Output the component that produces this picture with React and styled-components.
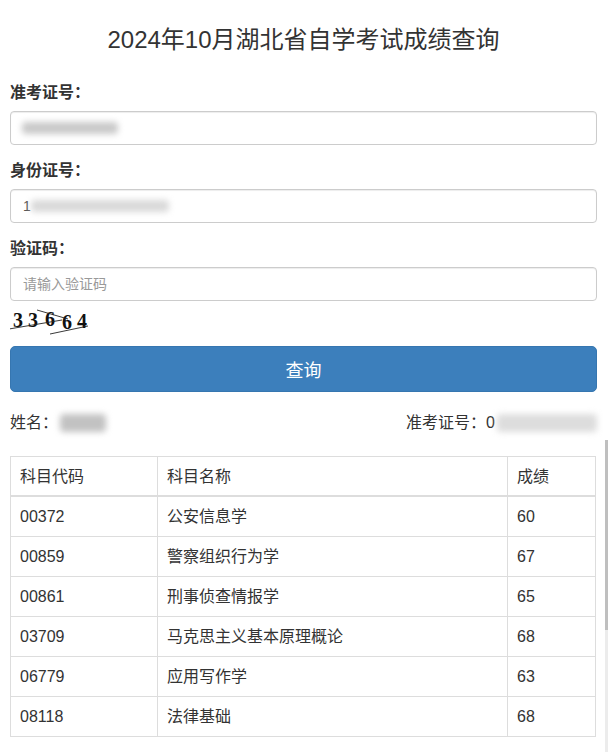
import React from "react";
import styled, { createGlobalStyle, css } from "styled-components";

const GlobalStyle = createGlobalStyle`
  html, body {
    margin: 0;
    padding: 0;
    background: #fff;
  }
  body {
    font-family: "Liberation Sans", "Noto Sans CJK SC", sans-serif;
    color: #333;
  }
  * {
    box-sizing: border-box;
  }
`;

const Page = styled.div`
  width: 608px;
  padding: 22px 11px 16px 10px;
`;

const Title = styled.h1`
  margin: 0 0 24px;
  font-size: 24px;
  line-height: 36px;
  font-weight: normal;
  text-align: center;
  color: #333;
`;

const Group = styled.div`
  margin-bottom: 15px;
`;

const Label = styled.label`
  display: block;
  font-size: 16px;
  line-height: 22px;
  font-weight: bold;
  margin-bottom: 7px;
  color: #333;
`;

const fieldBase = css`
  display: flex;
  align-items: center;
  width: 100%;
  height: 34px;
  padding: 6px 12px;
  border: 1px solid #ccc;
  border-radius: 4px;
  box-shadow: inset 0 1px 1px rgba(0, 0, 0, 0.075);
  background: #fff;
  font-size: 14px;
  font-family: inherit;
  color: #555;
`;

const FieldBox = styled.div`
  ${fieldBase}
`;

const FieldInput = styled.input`
  ${fieldBase}
  outline: none;
  &::placeholder {
    color: #999;
  }
`;

const Blur = styled.span`
  display: inline-block;
  width: ${(p) => p.$w}px;
  height: ${(p) => p.$h || 12}px;
  margin-left: ${(p) => p.$ml || 0}px;
  border-radius: 4px;
  background: ${(p) => p.$bg || "#c9c9c9"};
  filter: blur(3px);
`;

const Digit = styled.span`
  font-size: 14px;
  color: #555;
`;

const Captcha = styled.svg`
  display: block;
  margin: -11px 0 11px;
`;

const Button = styled.button`
  display: block;
  width: 100%;
  height: 46px;
  border: 1px solid #3676b0;
  border-radius: 5px;
  background: #3c7fbc;
  color: #fff;
  font-size: 18px;
  font-family: inherit;
  cursor: pointer;
`;

const InfoRow = styled.div`
  display: flex;
  justify-content: space-between;
  align-items: center;
  margin: 20px 0 22px;
  font-size: 16px;
  line-height: 22px;
`;

const InfoItem = styled.div`
  display: flex;
  align-items: center;
`;

const Table = styled.table`
  width: 585px;
  border-collapse: collapse;
  border: 1px solid #ddd;
  font-size: 16px;
  table-layout: fixed;

  th,
  td {
    border: 1px solid #ddd;
    padding: 8px 8px 8px 9px;
    line-height: 23px;
    text-align: left;
    font-weight: normal;
    color: #333;
  }

  thead th {
    border-bottom: 2px solid #ddd;
    padding-bottom: 7px;
  }
`;

const ScrollThumb = styled.div`
  position: fixed;
  right: 0;
  top: 440px;
  width: 3px;
  height: 190px;
  background: #bfbfbf;
`;

const ScrollTrack = styled.div`
  position: fixed;
  right: 0;
  top: 630px;
  bottom: 0;
  width: 3px;
  background: #ececec;
`;

const scores = [
  ["00372", "公安信息学", "60"],
  ["00859", "警察组织行为学", "67"],
  ["00861", "刑事侦查情报学", "65"],
  ["03709", "马克思主义基本原理概论", "68"],
  ["06779", "应用写作学", "63"],
  ["08118", "法律基础", "68"],
];

const CaptchaImage = () => (
  <Captcha width="84" height="30" viewBox="0 0 84 30">
    <g fontFamily="'Liberation Serif', serif" fontWeight="bold" fontSize="20" fill="#111">
      <text x="3" y="22">3</text>
      <text x="18" y="22">3</text>
      <text x="35" y="21">6</text>
      <text x="52" y="24">6</text>
      <text x="67" y="23">4</text>
    </g>
    <line x1="-1" y1="24" x2="52" y2="15" stroke="#222" strokeWidth="0.9" />
    <line x1="27" y1="5" x2="58" y2="14" stroke="#222" strokeWidth="0.9" />
    <line x1="40" y1="29" x2="78" y2="21" stroke="#222" strokeWidth="0.9" />
  </Captcha>
);

export default function App() {
  return (
    <>
      <GlobalStyle />
      <Page>
        <Title>2024年10月湖北省自学考试成绩查询</Title>

        <Group>
          <Label>准考证号：</Label>
          <FieldBox>
            <Blur $w={96} $ml={-1} />
          </FieldBox>
        </Group>

        <Group>
          <Label>身份证号：</Label>
          <FieldBox>
            <Digit>1</Digit>
            <Blur $w={138} $bg="#d9d9d9" />
          </FieldBox>
        </Group>

        <Group>
          <Label>验证码：</Label>
          <FieldInput placeholder="请输入验证码" />
        </Group>

        <CaptchaImage />

        <Button>查询</Button>

        <InfoRow>
          <InfoItem>
            姓名：
            <Blur $w={46} $h={18} $bg="#c2c2c2" $ml={2} />
          </InfoItem>
          <InfoItem>
            准考证号：0
            <Blur $w={100} $h={18} $bg="#dddddd" $ml={2} />
          </InfoItem>
        </InfoRow>

        <Table>
          <colgroup>
            <col style={{ width: 147 }} />
            <col style={{ width: 350 }} />
            <col style={{ width: 88 }} />
          </colgroup>
          <thead>
            <tr>
              <th>科目代码</th>
              <th>科目名称</th>
              <th>成绩</th>
            </tr>
          </thead>
          <tbody>
            {scores.map(([code, name, score]) => (
              <tr key={code}>
                <td>{code}</td>
                <td>{name}</td>
                <td>{score}</td>
              </tr>
            ))}
          </tbody>
        </Table>
      </Page>
      <ScrollThumb />
      <ScrollTrack />
    </>
  );
}
